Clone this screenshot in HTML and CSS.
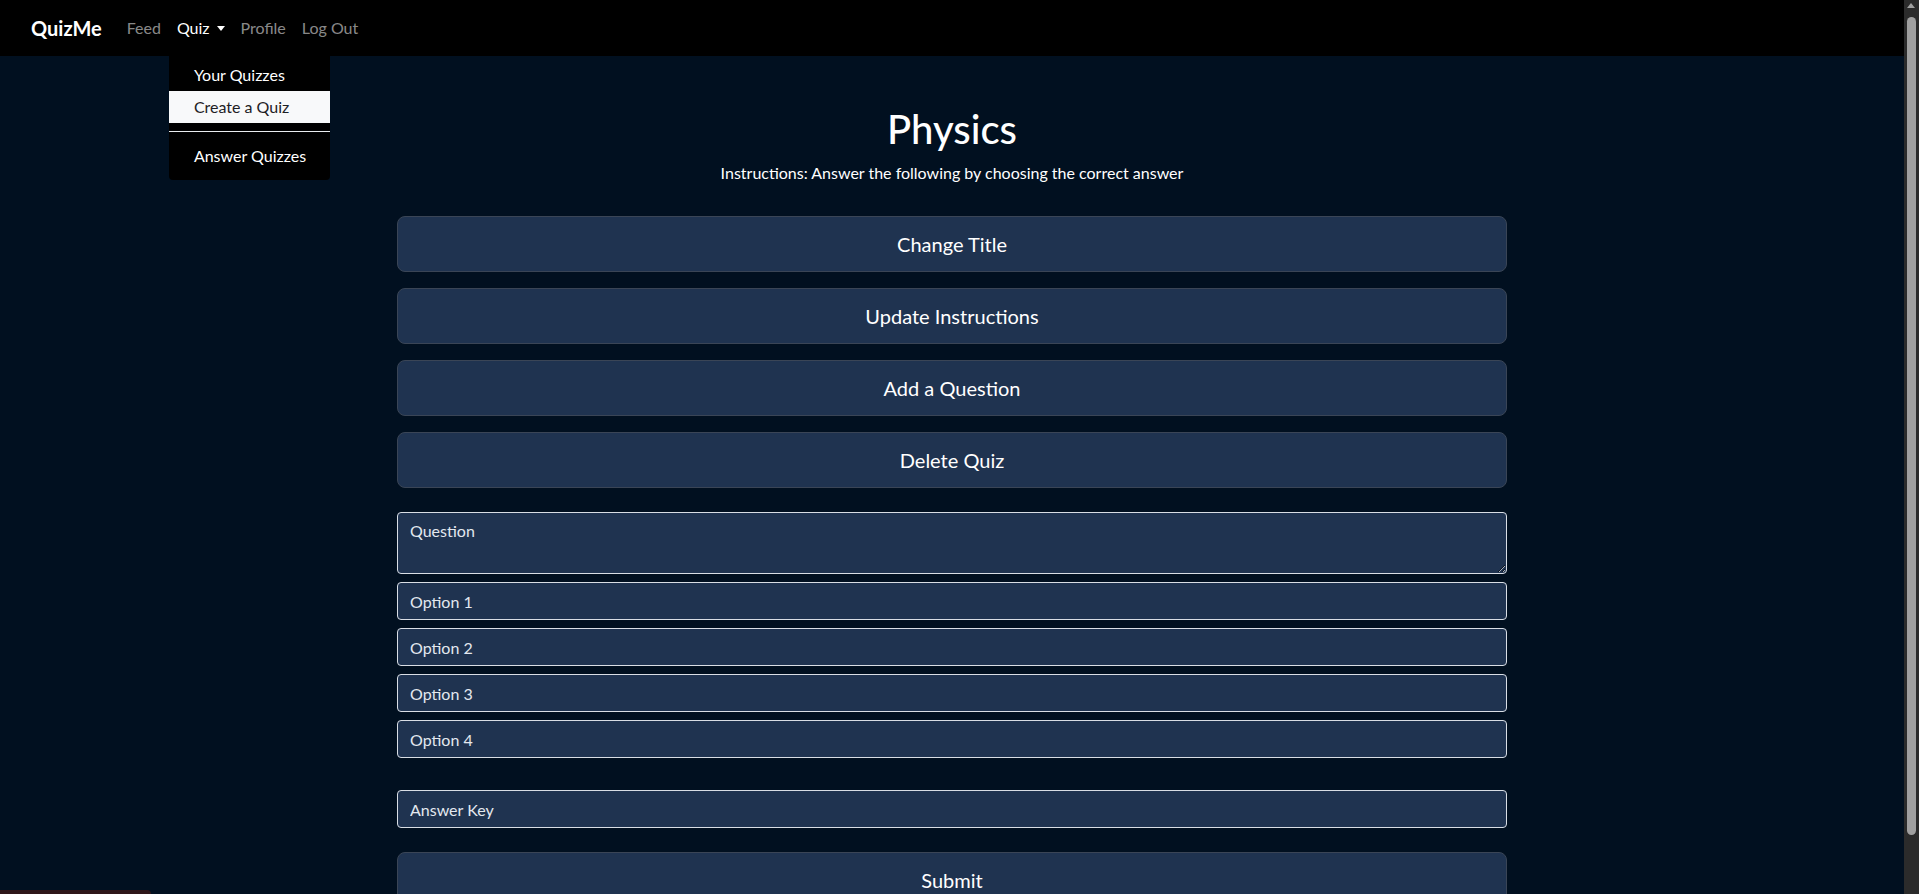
FILE: index.html
```html
<!DOCTYPE html>
<html lang="en">
<head>
<meta charset="utf-8">
<title>QuizMe - Create a Quiz</title>
<link rel="stylesheet" href="styles.css">
</head>
<body>
<nav class="navbar">
  <a class="brand" href="#">QuizMe</a>
  <ul class="nav">
    <li><a class="nav-link" href="#">Feed</a></li>
    <li class="dropdown">
      <a class="nav-link active" href="#">Quiz<span class="caret"></span></a>
      <div class="dropdown-menu">
        <a class="dropdown-item" href="#">Your Quizzes</a>
        <a class="dropdown-item hover" href="#">Create a Quiz</a>
        <div class="dropdown-divider"></div>
        <a class="dropdown-item" href="#">Answer Quizzes</a>
      </div>
    </li>
    <li><a class="nav-link" href="#">Profile</a></li>
    <li><a class="nav-link" href="#">Log Out</a></li>
  </ul>
</nav>

<main class="container">
  <header class="quiz-header">
    <h1 class="quiz-title">Physics</h1>
    <p class="quiz-instructions">Instructions: Answer the following by choosing the correct answer</p>
  </header>

  <div class="actions">
    <button class="btn-block">Change Title</button>
    <button class="btn-block">Update Instructions</button>
    <button class="btn-block">Add a Question</button>
    <button class="btn-block">Delete Quiz</button>
  </div>

  <form class="question-form">
    <textarea class="form-control textarea" rows="2" placeholder="Question"></textarea>
    <input class="form-control" type="text" placeholder="Option 1">
    <input class="form-control" type="text" placeholder="Option 2">
    <input class="form-control" type="text" placeholder="Option 3">
    <input class="form-control" type="text" placeholder="Option 4">
    <input class="form-control answer-key" type="text" placeholder="Answer Key">
    <button class="btn-block submit" type="button">Submit</button>
  </form>
</main>

<div class="toast-edge"></div>

<div class="scrollbar" aria-hidden="true">
  <span class="scroll-arrow"></span>
  <span class="scroll-thumb"></span>
</div>
</body>
</html>
```

FILE: styles.css
```css
* { box-sizing: border-box; }

html {
  background: #011020;
}

body {
  margin: 0 15px 0 0;
  background: #011020;
  color: #ffffff;
  font-family: Lato, "Open Sans", "Liberation Sans", sans-serif;
  font-size: 16px;
  line-height: 1.5;
}

a { text-decoration: none; color: inherit; }

/* Navbar */
.navbar {
  display: flex;
  align-items: center;
  height: 56px;
  padding: 8px 16px 8px 31px;
  background: #000000;
  position: relative;
  z-index: 10;
}
.brand {
  font-size: 20px;
  font-weight: 700;
  color: #ffffff;
  margin-right: 17px;
  line-height: 30px;
}
.nav {
  display: flex;
  list-style: none;
  margin: 0;
  padding: 0;
}
.nav li { position: relative; }
.nav-link {
  display: block;
  padding: 8px 8px;
  color: rgba(255, 255, 255, 0.55);
  line-height: 24px;
}
.nav-link.active { color: #ffffff; }
.caret {
  display: inline-block;
  margin-left: 7px;
  vertical-align: 3px;
  border-top: 5px solid currentColor;
  border-left: 4px solid transparent;
  border-right: 4px solid transparent;
}

.dropdown-menu {
  position: absolute;
  top: calc(100% + 3px);
  left: 0;
  min-width: 160px;
  padding: 8px 0;
  background: #000000;
  border-radius: 0 0 4px 4px;
}
.dropdown-item {
  display: block;
  padding: 4px 24px 4px 25px;
  color: #ffffff;
  white-space: nowrap;
  line-height: 24px;
}
.dropdown-item.hover {
  background: #f8f9fa;
  color: #1e2125;
}
.dropdown-divider {
  margin: 8px 0;
  border-top: 1px solid #e9ecef;
  height: 0;
}

/* Main */
.container {
  width: 1110px;
  margin: 0 auto;
  padding-bottom: 38px;
}
.quiz-header {
  text-align: center;
  padding-top: 49px;
}
.quiz-title {
  margin: 0 0 8px;
  font-size: 40px;
  font-weight: 500;
  line-height: 48px;
}
.quiz-instructions {
  margin: 0;
  font-size: 16px;
  line-height: 24px;
}

.actions {
  display: flex;
  flex-direction: column;
  gap: 16px;
  margin-top: 31px;
}
.btn-block {
  display: block;
  width: 100%;
  height: 56px;
  padding: 0 16px;
  font-family: inherit;
  font-size: 20px;
  color: #ffffff;
  background: #1f3350;
  border: 1px solid #3a4556;
  border-radius: 8px;
  cursor: pointer;
}

.question-form {
  display: flex;
  flex-direction: column;
  gap: 8px;
  margin-top: 24px;
}
.form-control {
  display: block;
  width: 100%;
  height: 38px;
  padding: 6px 12px;
  font-family: inherit;
  font-size: 16px;
  line-height: 24px;
  color: #e6ebf2;
  background: #1f3350;
  border: 1px solid #d9dee5;
  border-radius: 4px;
}
.form-control::placeholder { color: #e3e8ef; opacity: 1; }
.textarea {
  height: 62px;
  resize: vertical;
}
.answer-key { margin-top: 24px; }
.submit { margin-top: 16px; }

.toast-edge {
  position: fixed;
  left: 0;
  bottom: 0;
  width: 151px;
  height: 4px;
  background: #2e1619;
  border-top-right-radius: 4px;
}

/* Simulated browser scrollbar (overlays the right edge) */
.scrollbar {
  position: fixed;
  top: 0;
  right: 0;
  width: 15px;
  height: 100vh;
  background: #2b2b2b;
  z-index: 20;
}
.scroll-arrow {
  position: absolute;
  top: 3px;
  left: 3px;
  width: 0;
  height: 0;
  border-left: 4.5px solid transparent;
  border-right: 4.5px solid transparent;
  border-bottom: 5px solid #a0a0a0;
}
.scroll-thumb {
  position: absolute;
  top: 17px;
  left: 3px;
  width: 9px;
  height: 818px;
  background: #a0a0a0;
  border-radius: 5px;
}
```
